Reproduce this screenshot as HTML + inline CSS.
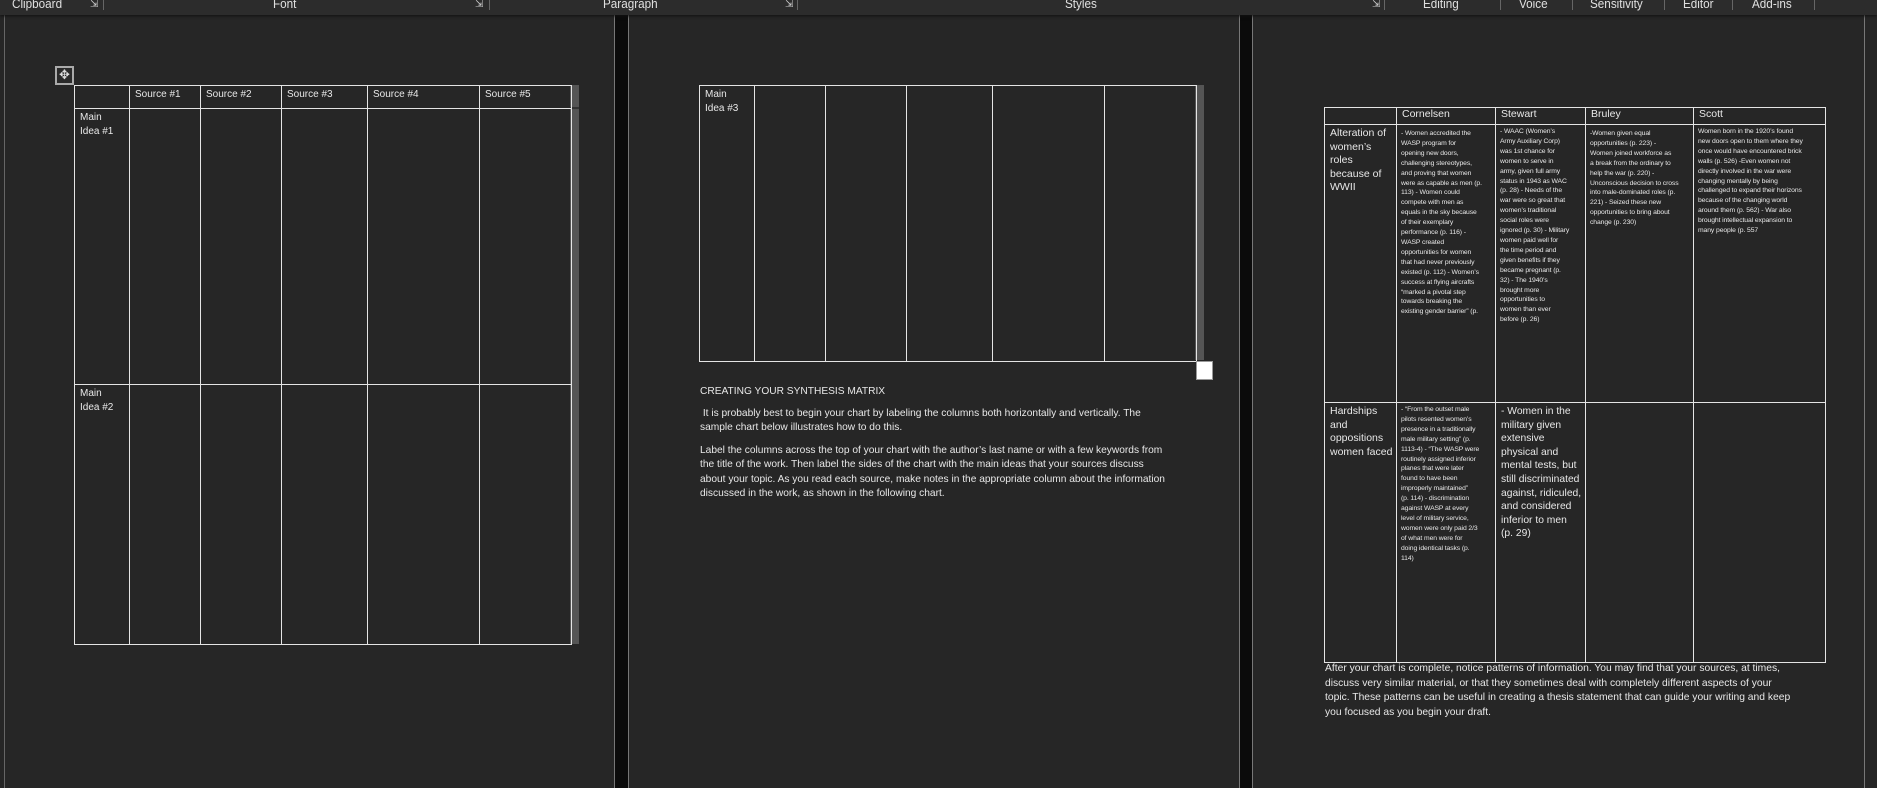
<!DOCTYPE html>
<html><head><meta charset="utf-8"><style>
*{margin:0;padding:0;box-sizing:border-box}
body{width:1877px;height:788px;background:#262626;position:relative;overflow:hidden;font-family:"Liberation Sans",sans-serif;color:#e8e8e8}
.abs{position:absolute}
.rib{left:0;top:0;width:1877px;height:15px;background:#2c2c2c;box-shadow:0 1px 3px #111;z-index:5}
.rl{position:absolute;top:-4px;font-size:13px;color:#e0e0e0;white-space:nowrap;transform:scaleX(.9);transform-origin:left}
.rs{position:absolute;top:0;width:1px;height:10px;background:#666}
.ri{position:absolute;top:-1px;font-size:10px;color:#ccc}
.sep{top:15px;height:773px;background:#0b0b0b;border-left:1px solid #777;border-right:1px solid #777}
table{position:absolute;border-collapse:collapse;table-layout:fixed}
td{border:1px solid #e4e4e4;vertical-align:top;padding:2px 5px;font-size:10px;line-height:14px;white-space:nowrap;overflow:hidden;color:#e8e8e8}
.t{font-size:6.8px;line-height:9.9px;letter-spacing:-.1px;padding:2px 4px}
.m{font-size:10.5px;line-height:13.6px}
p{position:absolute;font-size:10.2px;line-height:14.4px;white-space:nowrap;color:#e8e8e8}
.strip{background:#555}
</style></head><body>
<div class="abs rib">
<span class="rl" style="left:12px">Clipboard</span><span class="ri" style="left:90px">⇲</span><span class="rs" style="left:103px"></span>
<span class="rl" style="left:273px">Font</span><span class="ri" style="left:475px">⇲</span><span class="rs" style="left:489px"></span>
<span class="rl" style="left:603px">Paragraph</span><span class="ri" style="left:785px">⇲</span><span class="rs" style="left:797px"></span>
<span class="rl" style="left:1065px">Styles</span><span class="ri" style="left:1372px">⇲</span><span class="rs" style="left:1384px"></span>
<span class="rl" style="left:1423px">Editing</span><span class="rs" style="left:1500px"></span>
<span class="rl" style="left:1519px">Voice</span><span class="rs" style="left:1572px"></span>
<span class="rl" style="left:1590px">Sensitivity</span><span class="rs" style="left:1664px"></span>
<span class="rl" style="left:1683px">Editor</span><span class="rs" style="left:1732px"></span>
<span class="rl" style="left:1752px">Add-ins</span><span class="rs" style="left:1814px"></span>
</div>
<div class="abs" style="left:4px;top:15px;width:1px;height:773px;background:#666"></div>
<div class="abs sep" style="left:614px;width:15px"></div>
<div class="abs sep" style="left:1239px;width:14px"></div>
<div class="abs" style="left:1864px;top:15px;width:1px;height:773px;background:#777"></div>

<!-- page 1 -->
<div class="abs" style="left:55px;top:66px;width:19px;height:19px;background:#2a2a2a;border:2px solid #aaa;color:#ddd;font-size:13px;line-height:14px;text-align:center">✥</div>
<div class="abs strip" style="left:570px;top:85px;width:9px;height:559px"></div>
<div class="abs" style="left:570px;top:107px;width:9px;height:2px;background:#333"></div>
<table style="left:74px;top:85px;width:497px">
<col style="width:55px"><col style="width:71px"><col style="width:81px"><col style="width:86px"><col style="width:112px"><col style="width:92px">
<tr style="height:23px"><td></td><td>Source #1</td><td>Source #2</td><td>Source #3</td><td>Source #4</td><td>Source #5</td></tr>
<tr style="height:276px"><td>Main<br>Idea #1</td><td></td><td></td><td></td><td></td><td></td></tr>
<tr style="height:260px"><td>Main<br>Idea #2</td><td></td><td></td><td></td><td></td><td></td></tr>
</table>

<!-- page 2 -->
<div class="abs strip" style="left:1195px;top:85px;width:9px;height:275px"></div>
<table style="left:699px;top:85px;width:497px">
<col style="width:55px"><col style="width:71px"><col style="width:81px"><col style="width:86px"><col style="width:112px"><col style="width:92px">
<tr style="height:276px"><td>Main<br>Idea #3</td><td></td><td></td><td></td><td></td><td></td></tr>
</table>
<div class="abs" style="left:1196px;top:361px;width:17px;height:19px;background:#fff;border:1px solid #999"></div>
<p style="left:700px;top:385px">CREATING YOUR SYNTHESIS MATRIX</p>
<p style="left:700px;top:407px">&nbsp;It is probably best to begin your chart by labeling the columns both horizontally and vertically. The<br>sample chart below illustrates how to do this.</p>
<p style="left:700px;top:444px">Label the columns across the top of your chart with the author’s last name or with a few keywords from<br>the title of the work. Then label the sides of the chart with the main ideas that your sources discuss<br>about your topic. As you read each source, make notes in the appropriate column about the information<br>discussed in the work, as shown in the following chart.</p>

<!-- page 3 -->
<table style="left:1324px;top:107px;width:501px">
<col style="width:72px"><col style="width:99px"><col style="width:90px"><col style="width:108px"><col style="width:132px">
<tr style="height:17px"><td class="m" style="padding-top:0;line-height:13px">&nbsp;</td><td class="m" style="padding-top:0;line-height:13px">Cornelsen</td><td class="m" style="padding-top:0;line-height:13px">Stewart</td><td class="m" style="padding-top:0;line-height:13px">Bruley</td><td class="m" style="padding-top:0;line-height:13px">Scott</td></tr>
<tr style="height:278px"><td class="m">Alteration of<br>women’s<br>roles<br>because of<br>WWII</td>
<td class="t" style="padding-top:4px">- Women accredited the<br>WASP program for<br>opening new doors,<br>challenging stereotypes,<br>and proving that women<br>were as capable as men (p.<br>113) - Women could<br>compete with men as<br>equals in the sky because<br>of their exemplary<br>performance (p. 116) -<br>WASP created<br>opportunities for women<br>that had never previously<br>existed (p. 112) - Women’s<br>success at flying aircrafts<br>“marked a pivotal step<br>towards breaking the<br>existing gender barrier” (p.</td>
<td class="t">- WAAC (Women’s<br>Army Auxiliary Corp)<br>was 1st chance for<br>women to serve in<br>army, given full army<br>status in 1943 as WAC<br>(p. 28) - Needs of the<br>war were so great that<br>women’s traditional<br>social roles were<br>ignored (p. 30) - Military<br>women paid well for<br>the time period and<br>given benefits if they<br>became pregnant (p.<br>32) - The 1940’s<br>brought more<br>opportunities to<br>women than ever<br>before (p. 26)</td>
<td class="t" style="padding-top:4px">-Women given equal<br>opportunities (p. 223) -<br>Women joined workforce as<br>a break from the ordinary to<br>help the war (p. 220) -<br>Unconscious decision to cross<br>into male-dominated roles (p.<br>221) - Seized these new<br>opportunities to bring about<br>change (p. 230)</td>
<td class="t">Women born in the 1920’s found<br>new doors open to them where they<br>once would have encountered brick<br>walls (p. 526) -Even women not<br>directly involved in the war were<br>changing mentally by being<br>challenged to expand their horizons<br>because of the changing world<br>around them (p. 562) - War also<br>brought intellectual expansion to<br>many people (p. 557</td></tr>
<tr style="height:260px"><td class="m">Hardships<br>and<br>oppositions<br>women faced</td>
<td class="t">- “From the outset male<br>pilots resented women’s<br>presence in a traditionally<br>male military setting” (p.<br>1113-4) - “The WASP were<br>routinely assigned inferior<br>planes that were later<br>found to have been<br>improperly maintained”<br>(p. 114) - discrimination<br>against WASP at every<br>level of military service,<br>women were only paid 2/3<br>of what men were for<br>doing identical tasks (p.<br>114)</td>
<td class="m" style="font-size:10.3px">- Women in the<br>military given<br>extensive<br>physical and<br>mental tests, but<br>still discriminated<br>against, ridiculed,<br>and considered<br>inferior to men<br>(p. 29)</td>
<td></td><td></td></tr>
</table>
<p style="left:1325px;top:662px;font-size:10.3px;line-height:14.6px">After your chart is complete, notice patterns of information. You may find that your sources, at times,<br>discuss very similar material, or that they sometimes deal with completely different aspects of your<br>topic. These patterns can be useful in creating a thesis statement that can guide your writing and keep<br>you focused as you begin your draft.</p>
</body></html>
